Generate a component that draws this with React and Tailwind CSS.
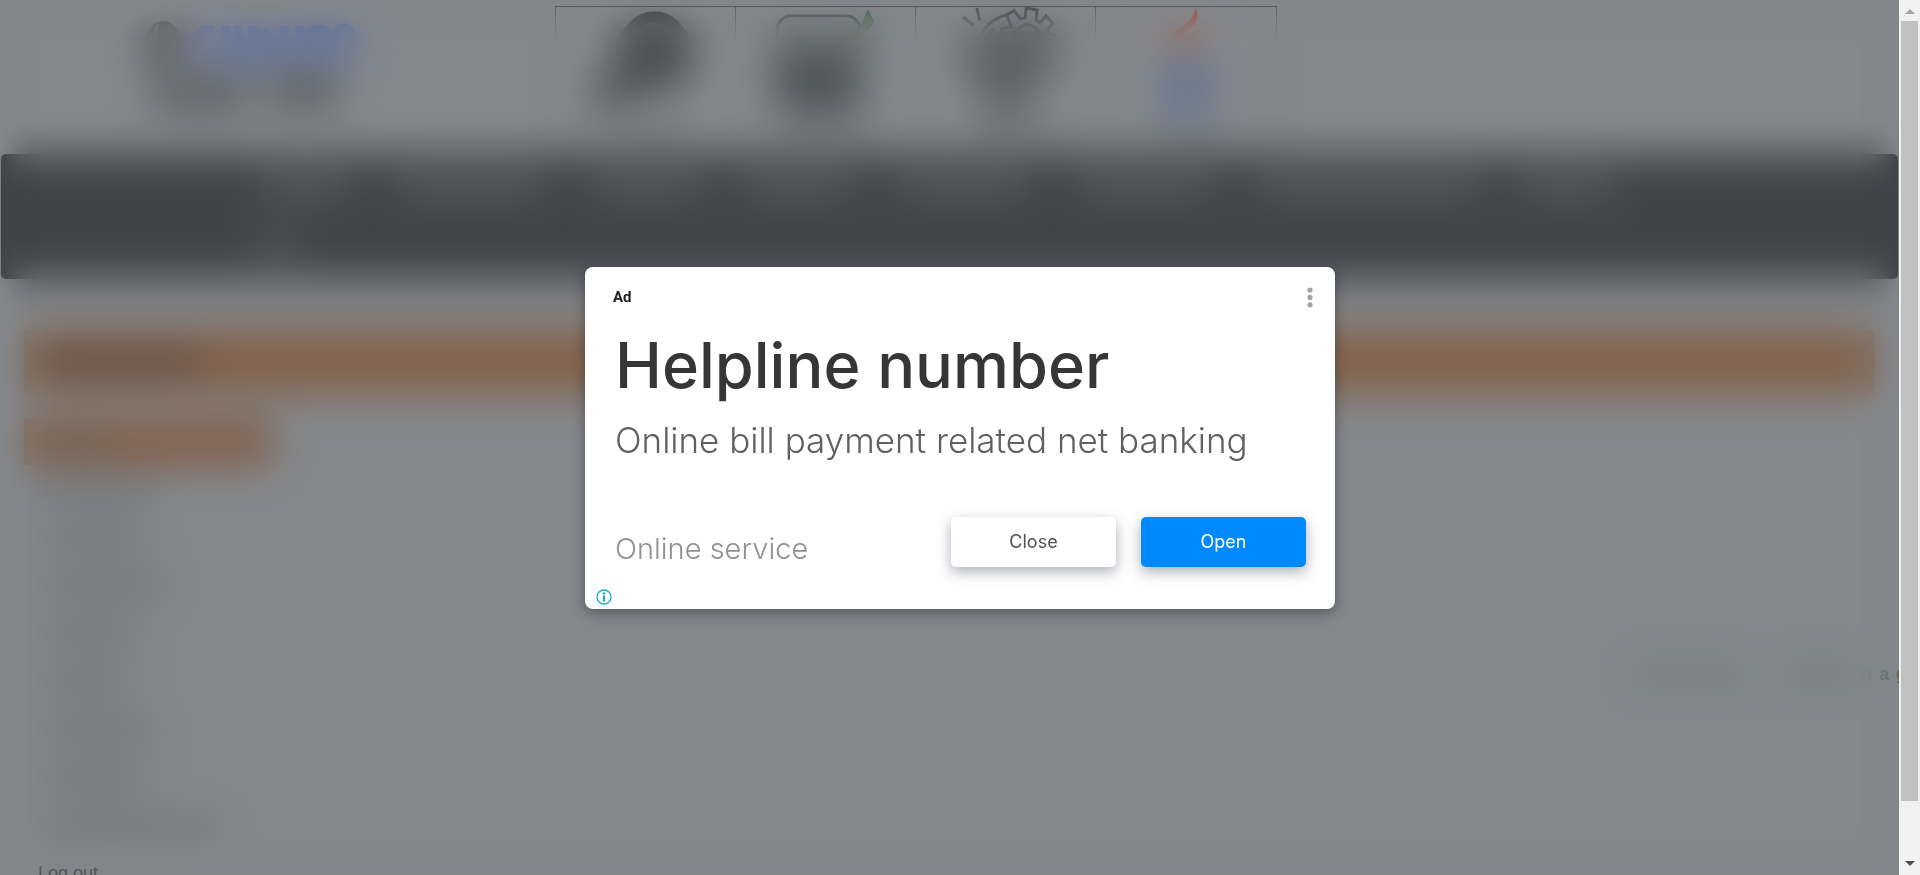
const navRows = [
  ['ml-0 w-[90px]', 'ml-[45px] w-[150px]', 'ml-[45px] w-[115px]', 'ml-[35px] w-[115px]', 'ml-[40px] w-[135px]', 'ml-[45px] w-[140px]', 'ml-[40px] w-[225px]', 'ml-[40px] w-[95px]'],
  ['ml-0 w-[36px]'],
];

const sideLinks = ['w-[118px]', 'w-[112px]', 'w-[136px]', 'w-[106px]', 'w-[96px]', 'w-[122px]', 'w-[112px]', 'w-[186px]'];

function Logo() {
  return (
    <svg className="ml-[140px] h-[110px] w-[220px] shrink-0" viewBox="140 10 220 110" fill="none" aria-hidden="true">
      <ellipse cx="163" cy="49" rx="18" ry="24" fill="#505054" />
      <path d="M158 28q-3 6-2 14" stroke="#84878b" strokeWidth="2" />
      <g stroke="#4f68a6" strokeWidth="9">
        <path d="M214 35q-16-6-16 12t16 16" />
        <path d="M226 30v24q0 10 12 10v-34" />
        <path d="M253 30v34h10q12 0 10-14-2-16-20-12" />
        <path d="M284 30v34" />
        <path d="M300 30v34" />
        <circle cx="318" cy="46" r="13" />
        <path d="M336 64v-20q0-12 8-12t8 12v20" />
      </g>
      <path d="M154 98h92M272 94h64" stroke="#505254" strokeWidth="24" />
      <path d="M150 112h190" stroke="#76797d" strokeWidth="8" />
    </svg>
  );
}

function SearchArt() {
  return (
    <svg className="h-full w-full" viewBox="0 0 180 142" fill="none" aria-hidden="true">
      <circle cx="99" cy="48" r="40" fill="#505357" />
      <circle cx="99" cy="39" r="29" stroke="#424549" strokeWidth="11" />
      <path d="M74 62l-28 40" stroke="#4a4d51" strokeWidth="30" />
      <path d="M70 122h60" stroke="#696c70" strokeWidth="10" />
    </svg>
  );
}

function ChecklistArt() {
  return (
    <svg className="h-full w-full" viewBox="0 0 180 142" fill="none" aria-hidden="true">
      <rect x="41" y="9" width="84" height="96" rx="14" fill="#5f626640" stroke="#4a4d51" strokeWidth="3" />
      <path d="M42 40h84v54q0 12-12 12h-60q-12 0-12-12z" fill="#505357" />
      <path d="M92 62l36-46 5-13 6 12-10 12-34 46-20-18 6-8z" fill="#4a6e52" stroke="#4a5a4e" strokeWidth="1" />
      <path d="M44 122h84" stroke="#696c70" strokeWidth="10" />
    </svg>
  );
}

function IdeaArt() {
  return (
    <svg className="h-full w-full" viewBox="0 0 180 142" fill="none" aria-hidden="true">
      <path d="M47 46q10-20 42-22h42l16 18-14 28-22 20-6 22h-28l-8-24-18-16z" fill="#606367" />
      <g stroke="#484b4f" strokeWidth="3">
        <path d="M61 1l3 13M47 10l11 9M44 34l10-4" />
        <path d="M62 45q2-30 29-37l8-4 6 8 5-1 1-10 11 2-1 10 4 3 6-7 7 8-6 6 3 4 6 2" />
        <path d="M91 8l5 12-10 2v14M68 38q2-10 10-16" />
        <circle cx="112" cy="30" r="12" />
        <path d="M56 48q-4 22 14 30l6 20h22l6-20q24-8 32-30" />
      </g>
      <path d="M60 122h80" stroke="#696c70" strokeWidth="10" />
    </svg>
  );
}

function CoffeeArt() {
  return (
    <svg className="h-full w-full" viewBox="0 0 180 142" fill="none" aria-hidden="true">
      <path d="M99 0q8 14-8 24-16 12-4 30-22-14-8-30 22-12 20-24z" fill="#a3513e" />
      <path d="M106 22q-18 6-14 20 6 8-2 16 14-8 8-18-4-8 8-18z" fill="#a3513e" />
      <path d="M66 62h46q14 0 12 10t-18 12l-4 16h-32z" fill="#5d7296" />
      <path d="M62 106q30 10 62 0" stroke="#5d7296" strokeWidth="6" />
      <path d="M76 124h34" stroke="#727579" strokeWidth="8" />
    </svg>
  );
}

function Page() {
  return (
    <div className="flex h-full flex-col overflow-hidden">
      <header className="flex h-[154px] shrink-0 pt-[6px]">
        <Logo />
        <div className="ml-[195px] grid h-[142px] w-[722px] shrink-0 grid-cols-4 divide-x divide-[#4d5054] border border-[#4d5054]">
          <div className="min-h-0"><SearchArt /></div>
          <div className="min-h-0"><ChecklistArt /></div>
          <div className="min-h-0"><IdeaArt /></div>
          <div className="min-h-0"><CoffeeArt /></div>
        </div>
      </header>

      <nav className="mx-px flex h-[125px] shrink-0 flex-col gap-[34px] rounded-[5px] bg-[#404347] pt-[18px] pl-[259px]">
        {navRows.map((row, i) => (
          <div key={i} className="flex">
            {row.map((c, j) => (
              <div key={j} className={`h-[26px] shrink-0 bg-[#585b5f] ${c}`} />
            ))}
          </div>
        ))}
      </nav>

      <div className="mx-6 mt-[51px] flex h-[63px] shrink-0 items-center bg-[#83624a] pl-5">
        <div className="h-5 w-[155px] bg-[#5c483f]" />
      </div>

      <div className="mx-6 mt-[26px] flex flex-1">
        <aside className="w-[248px] shrink-0">
          <div className="flex h-[46px] items-center bg-[#835f46] pl-5">
            <div className="h-4 w-[60px] bg-[#6c5e4d]" />
          </div>
          <ul className="pl-[14px]">
            {sideLinks.map((w, i) => (
              <li key={i} className="flex h-12 items-center">
                <div className={`h-5 bg-[#717478] ${w}`} />
              </li>
            ))}
            <li className="flex h-12 items-center">
              <a href="#logout" className="font-['Liberation_Sans',sans-serif] text-[18px] text-[#4a4d51]">Log out</a>
            </li>
          </ul>
        </aside>
        <div className="-mr-6 flex flex-1 justify-end overflow-hidden pt-[243px]">
          <div className="-mr-2 flex h-6 items-center gap-[7px] font-['Liberation_Sans',sans-serif] text-[18px] font-bold text-[#54685a]">
            <div className="h-5 w-[120px] bg-[#717c76]" />
            <div className="ml-6 h-5 w-[74px] bg-[#717c76]" />
            <span>n</span>
            <span>a</span>
            <span>g</span>
          </div>
        </div>
      </div>
    </div>
  );
}

function Scrollbar() {
  return (
    <div className="flex w-[21px] shrink-0 flex-col items-center bg-[#f1f1f1]" aria-hidden="true">
      <svg className="h-[21px] w-[21px] shrink-0" viewBox="0 0 21 21"><path d="M6 14l5-5 5 5z" fill="#a3a3a3" /></svg>
      <div className="mb-[53px] w-[17px] flex-1 bg-[#c1c1c1]" />
      <svg className="h-[21px] w-[21px] shrink-0" viewBox="0 0 21 21"><path d="M6 7l5 5 5-5z" fill="#505050" /></svg>
    </div>
  );
}

function AdDialog() {
  return (
    <section
      role="dialog"
      aria-labelledby="ad-title"
      className="w-[750px] max-w-full rounded-lg bg-white pt-5 pb-1 font-[Inter,sans-serif] shadow-[0_4px_14px_rgba(0,0,0,0.35)]"
    >
      <div className="flex h-[22px] items-center justify-between pr-[22px] pl-7">
        <span className="font-[Roboto,sans-serif] text-[15px] font-bold text-[#202124]">Ad</span>
        <button type="button" aria-label="Ad options">
          <svg className="block h-[22px] w-[6px]" viewBox="0 0 6 22" fill="#a0a3a7">
            <circle cx="3" cy="3" r="2.6" />
            <circle cx="3" cy="10.4" r="2.6" />
            <circle cx="3" cy="17.8" r="2.6" />
          </svg>
        </button>
      </div>
      <div className="pr-[29px] pl-[30px]">
        <h1 id="ad-title" className="mt-5 text-[63px] leading-[72px] font-medium text-[#363636]">Helpline number</h1>
        <p className="mt-[17px] text-[35px] leading-[44px] font-light text-[#5f6062]">Online bill payment related net banking</p>
        <div className="mt-[55px] flex items-end justify-between">
          <p className="text-[29px] leading-[36px] font-light text-[#919193]">Online service</p>
          <div className="flex gap-[25px]">
            <button type="button" className="h-[50px] w-[165px] rounded-[5px] bg-white text-[18px] text-[#505052] shadow-[0_5px_14px_rgba(60,64,90,0.42)]">Close</button>
            <button type="button" className="h-[50px] w-[165px] rounded-[5px] bg-[#0088ff] text-[18px] text-white shadow-[0_5px_14px_rgba(60,64,90,0.42)]">Open</button>
          </div>
        </div>
      </div>
      <div className="mt-[22px] flex px-[11px]">
        <a href="#why-this-ad" aria-label="Why this ad">
          <svg className="block h-4 w-4" viewBox="0 0 16 16" fill="none">
            <circle cx="8" cy="8" r="7" stroke="#14b0cc" strokeWidth="1.3" />
            <circle cx="8" cy="4.4" r="1.2" fill="#14b0cc" />
            <path d="M8 6.6v6" stroke="#14b0cc" strokeWidth="2" />
          </svg>
        </a>
      </div>
    </section>
  );
}

export default function App() {
  return (
    <div className="flex h-screen">
      <main className="relative min-w-0 flex-1 overflow-hidden bg-[#84878b]">
        <Page />
        <div className="absolute inset-0 backdrop-blur-[20px] [mask-composite:intersect] [mask-image:linear-gradient(to_right,rgba(0,0,0,0.2),rgba(0,0,0,0.72)_15px,rgba(0,0,0,0.94)_28px,black_40px,black_calc(100%-40px),rgba(0,0,0,0.94)_calc(100%-28px),rgba(0,0,0,0.72)_calc(100%-15px),rgba(0,0,0,0.2)),linear-gradient(to_bottom,rgba(0,0,0,0.2),rgba(0,0,0,0.62)_15px,rgba(0,0,0,0.9)_28px,black_40px,black_calc(100%-40px),rgba(0,0,0,0.9)_calc(100%-28px),rgba(0,0,0,0.62)_calc(100%-15px),rgba(0,0,0,0.2))]" />
      </main>
      <Scrollbar />
      <div className="fixed inset-0 flex items-center justify-center">
        <AdDialog />
      </div>
    </div>
  );
}
